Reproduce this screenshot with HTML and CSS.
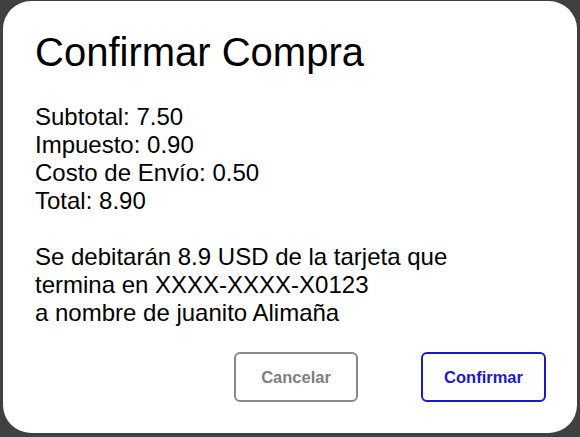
FILE: index.html
```html
<!DOCTYPE html>
<html lang="es">
<head>
<meta charset="utf-8">
<title>Confirmar Compra</title>
<link rel="stylesheet" href="styles.css">
</head>
<body>
<div class="modal">
  <h1 class="title">Confirmar Compra</h1>
  <div class="summary">
    <div>Subtotal: 7.50</div>
    <div>Impuesto: 0.90</div>
    <div>Costo de Envío: 0.50</div>
    <div>Total: 8.90</div>
  </div>
  <p class="notice">Se debitarán 8.9 USD de la tarjeta que<br>termina en XXXX-XXXX-X0123<br>a nombre de juanito Alimaña</p>
  <div class="actions">
    <button class="btn btn-cancel">Cancelar</button>
    <button class="btn btn-confirm">Confirmar</button>
  </div>
</div>
</body>
</html>
```
FILE: styles.css
```css
html, body {
  margin: 0;
  padding: 0;
  height: 100%;
}
body {
  background: #404040;
  font-family: "Liberation Sans", Arial, sans-serif;
  color: #000;
  padding: 1px 3px 4px 3px;
  box-sizing: border-box;
}
.modal {
  background: #fff;
  border-radius: 28px;
  height: 432px;
  box-sizing: border-box;
  padding: 28px 31px 31px 32px;
  display: flex;
  flex-direction: column;
}
.title {
  margin: 0 0 28px 0;
  font-size: 40px;
  font-weight: normal;
  line-height: 46px;
}
.summary {
  font-size: 24px;
  line-height: 28px;
}
.notice {
  margin: 28px 0 0 0;
  font-size: 24px;
  line-height: 28px;
}
.actions {
  margin-top: 25px;
  display: flex;
  justify-content: flex-end;
  gap: 63px;
}
.btn {
  width: 124px;
  height: 50px;
  background: #fff;
  border-radius: 6px;
  border: 2px solid;
  font-family: "Liberation Sans", Arial, sans-serif;
  font-size: 16.5px;
  font-weight: bold;
  padding: 0;
}
.btn-cancel {
  border-color: #888;
  color: #808080;
}
.btn-confirm {
  width: 125px;
  border-color: #1a1ac8;
  color: #1a1ac8;
}
```
